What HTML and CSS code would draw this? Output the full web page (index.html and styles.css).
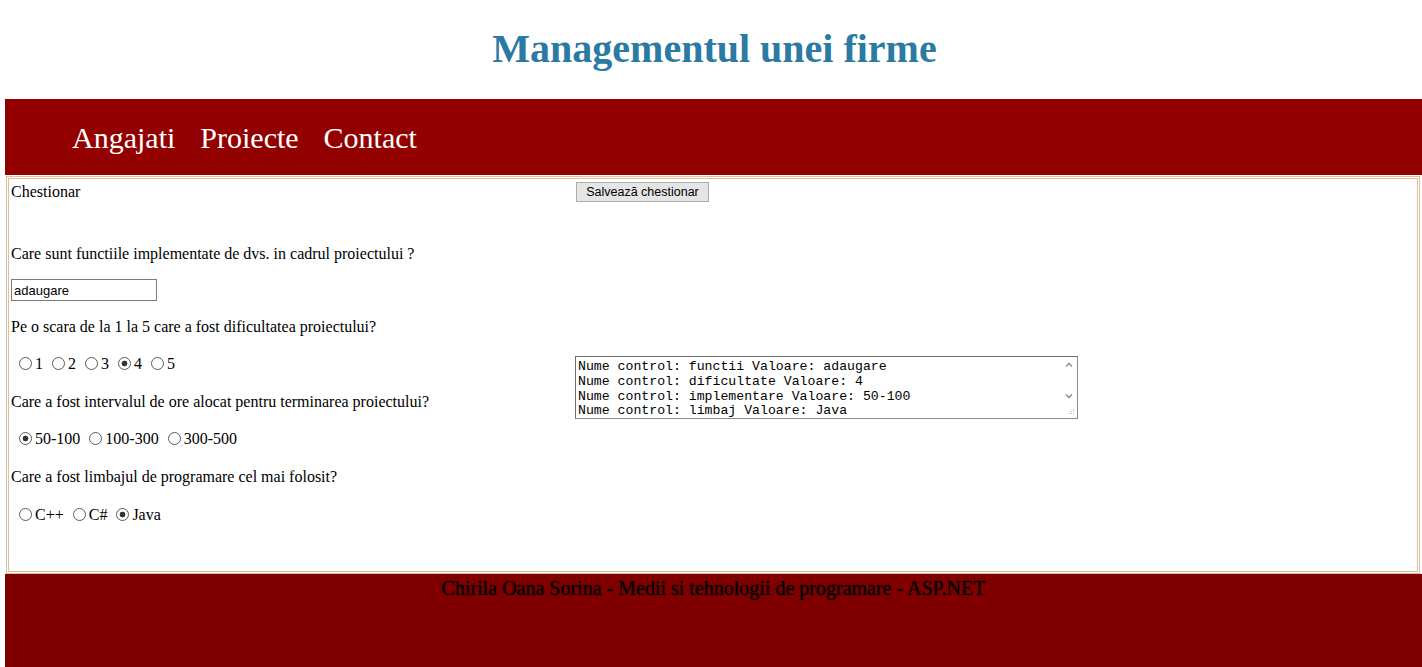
FILE: index.html
```html
<!DOCTYPE html>
<html lang="ro">
<head>
<meta charset="utf-8">
<title>Managementul unei firme</title>
<link rel="stylesheet" href="styles.css">
</head>
<body>
<div class="page">
  <header class="header">
    <h1 class="site-title">Managementul unei firme</h1>
  </header>
  <nav class="nav">
    <a class="nav-link" href="#">Angajati</a>
    <a class="nav-link" href="#">Proiecte</a>
    <a class="nav-link" href="#">Contact</a>
  </nav>
  <main class="content">
    <div class="col-left">
      <div class="txt first">Chestionar</div>
      <div class="txt q1">Care sunt functiile implementate de dvs. in cadrul proiectului ?</div>
      <input class="text-input" type="text" value="adaugare">
      <div class="txt q">Pe o scara de la 1 la 5 care a fost dificultatea proiectului?</div>
      <div class="radios">
        <span class="opt"><input type="radio" name="dif"><label>1</label></span>
        <span class="opt"><input type="radio" name="dif"><label>2</label></span>
        <span class="opt"><input type="radio" name="dif"><label>3</label></span>
        <span class="opt"><input type="radio" name="dif" checked><label>4</label></span>
        <span class="opt"><input type="radio" name="dif"><label>5</label></span>
      </div>
      <div class="txt q">Care a fost intervalul de ore alocat pentru terminarea proiectului?</div>
      <div class="radios">
        <span class="opt"><input type="radio" name="ore" checked><label>50-100</label></span>
        <span class="opt"><input type="radio" name="ore"><label>100-300</label></span>
        <span class="opt"><input type="radio" name="ore"><label>300-500</label></span>
      </div>
      <div class="txt q">Care a fost limbajul de programare cel mai folosit?</div>
      <div class="radios last">
        <span class="opt"><input type="radio" name="lb"><label>C++</label></span>
        <span class="opt"><input type="radio" name="lb"><label>C#</label></span>
        <span class="opt"><input type="radio" name="lb" checked><label>Java</label></span>
      </div>
    </div>
    <div class="col-right">
      <button class="btn" type="button">Salvează chestionar</button>
      <div class="textarea">
        <div class="ta-text">Nume control: functii Valoare: adaugare
Nume control: dificultate Valoare: 4
Nume control: implementare Valoare: 50-100
Nume control: limbaj Valoare: Java</div>
        <div class="ta-scroll">
          <svg class="arrow" width="16" height="16" viewBox="0 0 16 16"><path d="M5 9.5 L8 6.5 L11 9.5" fill="none" stroke="#8a8a8a" stroke-width="1.4"/></svg>
          <div class="ta-track"></div>
          <svg class="arrow" width="16" height="14" viewBox="0 0 16 14"><path d="M5 5.5 L8 8.5 L11 5.5" fill="none" stroke="#8a8a8a" stroke-width="1.4"/></svg>
          <svg class="grip" width="16" height="15" viewBox="0 0 16 15"><g fill="#b5b5b5"><rect x="12" y="6" width="1" height="1"/><rect x="10" y="8" width="1" height="1"/><rect x="12" y="8" width="1" height="1"/><rect x="8" y="10" width="1" height="1"/><rect x="10" y="10" width="1" height="1"/><rect x="12" y="10" width="1" height="1"/></g></svg>
        </div>
      </div>
    </div>
  </main>
  <footer class="footer">Chirila Oana Sorina - Medii si tehnologii de programare - ASP.NET</footer>
</div>
</body>
</html>
```
FILE: styles.css
```css
html, body {
  margin: 0;
  padding: 0;
  background: #ffffff;
}
body {
  font-family: "Liberation Serif", "Times New Roman", serif;
  font-size: 16px;
  color: #000;
  overflow: hidden;
}
.page {
  padding-left: 5px;
}
.header {
  height: 99px;
  box-sizing: border-box;
  padding-top: 26px;
}
.site-title {
  margin: 0;
  text-align: center;
  font-family: "Liberation Serif", "Times New Roman", serif;
  font-weight: bold;
  font-size: 40px;
  line-height: 46px;
  color: #2a7aa3;
  padding-left: 2px;
}
.nav {
  background: #930000;
  height: 76px;
  box-sizing: border-box;
  padding: 21px 0 0 67px;
  display: flex;
  gap: 25px;
}
.nav-link {
  color: #ffffff;
  text-decoration: none;
  font-size: 30px;
  line-height: 36px;
}
.content {
  margin: 1px 2px 0 1px;
  height: 398px;
  box-sizing: border-box;
  border: 3px double #dcbf9f;
  display: grid;
  grid-template-columns: 566px 1fr;
  align-items: start;
}
.col-left {
  padding-left: 2px;
  display: flex;
  flex-direction: column;
  align-items: flex-start;
}
.txt {
  line-height: 18px;
}
.first { margin-top: 4px; }
.q1 { margin-top: 44px; }
.q { margin-top: 17px; }
.radios + .q { margin-top: 20px; }
.text-input {
  margin: 16px 0 0 0;
  width: 146px;
  height: 22px;
  box-sizing: border-box;
  border: 1px solid #7a7a7a;
  padding: 0 2px;
  font-family: "Liberation Sans", Arial, sans-serif;
  font-size: 13px;
  color: #000;
  outline: none;
}
.radios {
  margin-top: 19px;
  padding-left: 3px;
  display: flex;
  gap: 4px;
  line-height: 18px;
}
.radios.last {
  margin-top: 20px;
}
.opt input {
  appearance: none;
  -webkit-appearance: none;
  width: 13px;
  height: 13px;
  box-sizing: border-box;
  margin: 0 3px 0 5px;
  border: 1px solid #5a5a5a;
  border-radius: 50%;
  background: #fff;
  vertical-align: -1px;
}
.opt input:checked {
  background: radial-gradient(circle, #333 0, #333 2.6px, #fff 3.2px);
}
.col-right {
  display: flex;
  flex-direction: column;
  align-items: flex-start;
}
.btn {
  margin: 3px 0 0 1px;
  width: 133px;
  height: 20px;
  padding: 0;
  border: 1px solid #adadad;
  background: #e5e5e5;
  font-family: "Liberation Sans", Arial, sans-serif;
  font-size: 12.5px;
  color: #000;
}
.textarea {
  margin-top: 154px;
  width: 503px;
  height: 63px;
  box-sizing: border-box;
  border: 1px solid #8c8c8c;
  border-top-color: #6e6e6e;
  border-left-color: #6e6e6e;
  display: flex;
  background: #fff;
}
.ta-text {
  flex: 1;
  padding: 3px 2px 0 2px;
  font-family: "Liberation Mono", "Courier New", monospace;
  font-size: 13.2px;
  line-height: 14.8px;
  white-space: pre;
  overflow: hidden;
  color: #000;
}
.ta-scroll {
  width: 16px;
  display: flex;
  flex-direction: column;
}
.ta-scroll .arrow {
  display: block;
  flex: none;
}
.ta-track {
  flex: 1;
}
.ta-scroll .grip {
  display: block;
  flex: none;
}
.footer {
  background: #800000;
  height: 93px;
  box-sizing: border-box;
  text-align: center;
  font-size: 20px;
  line-height: 24px;
  padding-top: 2px;
  color: #000;
  text-shadow: 0 0 2px rgba(0, 0, 0, 0.6);
}
```
